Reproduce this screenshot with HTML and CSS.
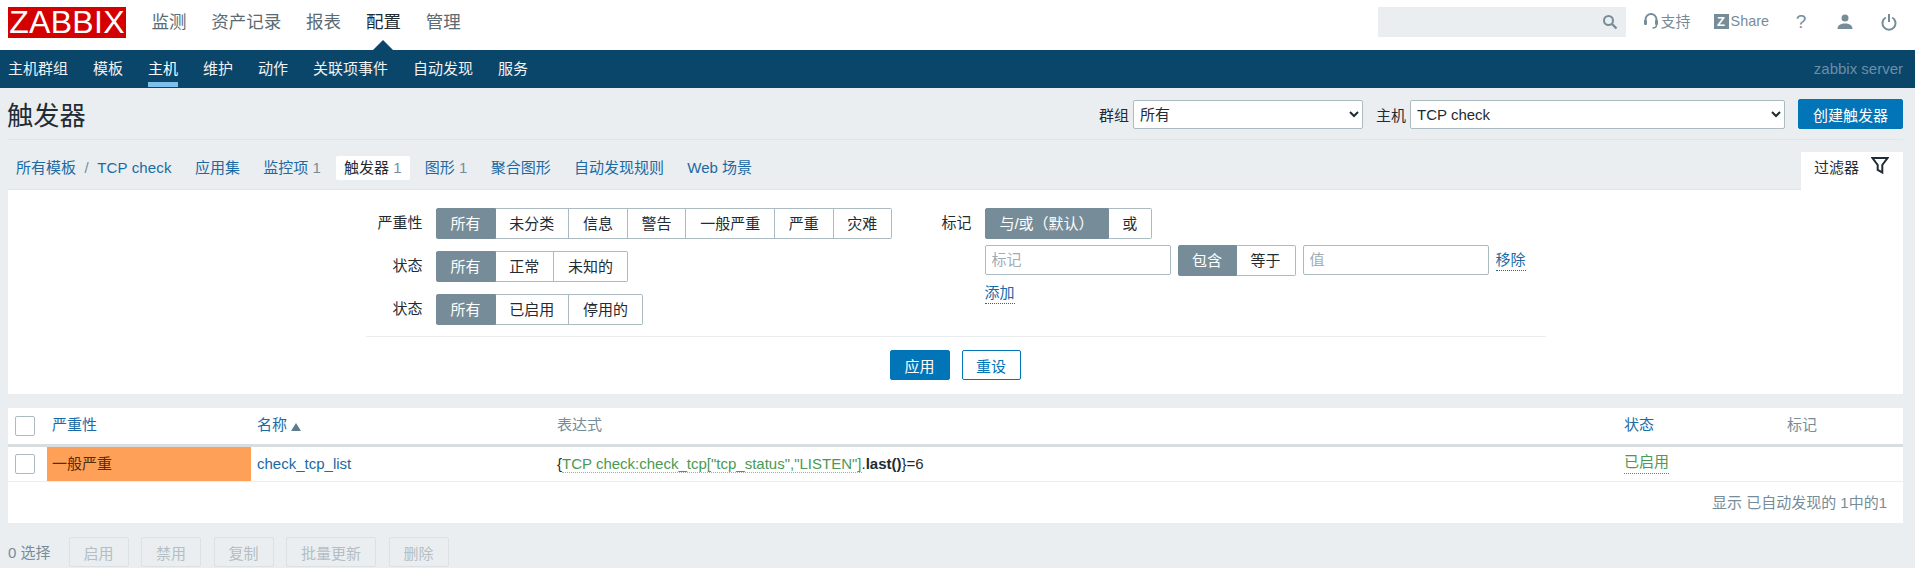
FILE: index.html
```html
<!DOCTYPE html>
<html lang="zh">
<head>
    <meta charset="UTF-8">
    <title>触发器</title>
    <link rel="stylesheet" href="styles.css">
</head>
<body>
    <header class="topbar">
        <a class="logo">ZABBIX</a>
        <nav class="main-nav">
            <a>监测</a>
            <a>资产记录</a>
            <a>报表</a>
            <a class="selected">配置</a>
            <a>管理</a>
        </nav>
        <div class="top-tools">
            <div class="search">
                <input type="text">
                <svg width="16" height="16" viewBox="0 0 16 16"><circle cx="6.5" cy="6.5" r="4.5" fill="none" stroke="#768d99" stroke-width="2"/><path d="M10 10l4.5 4.5" stroke="#768d99" stroke-width="2.4"/></svg>
            </div>
            <a class="tool support">
                <svg width="16" height="18" viewBox="0 0 16 18"><path d="M2.500 11V7.500a5.500 5.500 0 0 1 11 0V11" fill="none" stroke="#768d99" stroke-width="2"/><rect x="1" y="8" width="3" height="5" rx="1" fill="#768d99"/><rect x="12" y="8" width="3" height="5" rx="1" fill="#768d99"/><path d="M13.500 13c0 2-1.500 3-4 3" fill="none" stroke="#768d99" stroke-width="1.500"/></svg>
                支持
            </a>
            <a class="tool share"><span class="z-box">Z</span>Share</a>
            <a class="tool icon-only help">?</a>
            <a class="tool icon-only">
                <svg width="16" height="18" viewBox="0 0 16 18"><circle cx="8" cy="5" r="3.500" fill="#768d99"/><path d="M0.500 16c0-4 3.500-5.500 7.500-5.500s7.500 1.500 7.500 5.500z" fill="#768d99"/></svg>
            </a>
            <a class="tool icon-only">
                <svg width="16" height="18" viewBox="0 0 16 18"><path d="M4.800 4.500a6.500 6.500 0 1 0 6.400 0" fill="none" stroke="#768d99" stroke-width="2"/><path d="M8 1v8" stroke="#768d99" stroke-width="2"/></svg>
            </a>
        </div>
    </header>

    <nav class="sub-nav">
        <a>主机群组</a>
        <a>模板</a>
        <a class="selected">主机</a>
        <a>维护</a>
        <a>动作</a>
        <a>关联项事件</a>
        <a>自动发现</a>
        <a>服务</a>
        <span class="server-name">zabbix server</span>
    </nav>

    <main class="content">
        <div class="title-row">
            <h1>触发器</h1>
            <form class="title-controls">
                <label>群组</label>
                <select class="select-group"><option>所有</option></select>
                <label class="host-label">主机</label>
                <select class="select-host"><option>TCP check</option></select>
                <button type="button" class="btn-primary create">创建触发器</button>
            </form>
        </div>

        <div class="tabs-row">
            <div class="crumbs">
                <a>所有模板</a><span class="slash">/</span><a class="crumb-host">TCP check</a>
            </div>
            <a class="tab">应用集</a>
            <a class="tab">监控项 <sup>1</sup></a>
            <a class="tab active">触发器 <sup>1</sup></a>
            <a class="tab">图形 <sup>1</sup></a>
            <a class="tab">聚合图形</a>
            <a class="tab">自动发现规则</a>
            <a class="tab">Web 场景</a>
            <a class="filter-tab">过滤器
                <svg width="18" height="17" viewBox="0 0 18 17"><path d="M1.500 1h15l-5.200 7v7.500l-4.600-2.500v-5z" fill="none" stroke="#1f2c33" stroke-width="2"/></svg>
            </a>
        </div>

        <section class="filter">
            <div class="filter-form">
                <div class="filter-left">
                    <label>严重性</label>
                    <div class="seg">
                        <span class="on w60">所有</span><span>未分类</span><span>信息</span><span>警告</span><span>一般严重</span><span>严重</span><span>灾难</span>
                    </div>
                    <label>状态</label>
                    <div class="seg">
                        <span class="on w60">所有</span><span>正常</span><span>未知的</span>
                    </div>
                    <label>状态</label>
                    <div class="seg">
                        <span class="on w60">所有</span><span>已启用</span><span>停用的</span>
                    </div>
                </div>
                <div class="filter-right">
                    <label>标记</label>
                    <div class="seg">
                        <span class="on w124">与/或（默认）</span><span>或</span>
                    </div>
                    <div class="tag-row">
                        <input class="tag-input" type="text" placeholder="标记">
                        <div class="seg seg-small">
                            <span class="on">包含</span><span>等于</span>
                        </div>
                        <input class="tag-input" type="text" placeholder="值">
                        <a class="dotted">移除</a>
                    </div>
                    <div class="add-row"><a class="dotted">添加</a></div>
                </div>
            </div>
            <div class="filter-buttons">
                <button type="button" class="btn-primary apply">应用</button>
                <button type="button" class="btn-alt">重设</button>
            </div>
        </section>

        <section class="list">
            <table>
                <colgroup>
                    <col class="c-check"><col class="c-sev"><col class="c-name"><col class="c-expr"><col class="c-status"><col>
                </colgroup>
                <thead>
                    <tr>
                        <th><span class="box"></span></th>
                        <th><a>严重性</a></th>
                        <th class="name-col"><a>名称</a> <i class="sort"></i></th>
                        <th>表达式</th>
                        <th><a>状态</a></th>
                        <th>标记</th>
                    </tr>
                </thead>
                <tbody>
                    <tr>
                        <td><span class="box"></span></td>
                        <td class="sev-average">一般严重</td>
                        <td class="name-col"><a>check_tcp_list</a></td>
                        <td class="expr">{<a class="green item-link">TCP check:check_tcp["tcp_status","LISTEN"]</a>.<b>last()</b>}=6</td>
                        <td><a class="green dotted status-link">已启用</a></td>
                        <td></td>
                    </tr>
                </tbody>
            </table>
            <div class="table-stats">显示 已自动发现的 1中的1</div>
        </section>

        <div class="actions">
            <span class="selected-count">0 选择</span>
            <button type="button" disabled>启用</button>
            <button type="button" disabled>禁用</button>
            <button type="button" disabled>复制</button>
            <button type="button" disabled>批量更新</button>
            <button type="button" disabled>删除</button>
        </div>
    </main>
</body>
</html>
```

FILE: styles.css
```css
*{
    box-sizing: border-box;
}
html,body{
    margin: 0;
    height: 568px;
    overflow: hidden;
}
body{
    background: #ebeef0;
    color: #1f2c33;
    font-family: "Liberation Sans", "Noto Sans CJK SC", sans-serif;
    font-size: 15px;
}
a{
    color: #1a6aa5;
    text-decoration: none;
}

/* top bar */
.topbar{
    height: 50px;
    background: #fff;
    display: flex;
    align-items: flex-start;
    padding: 7px 18px 0 8px;
}
.logo{
    width: 118px;
    height: 31px;
    background: #d40000;
    color: #fff;
    font-size: 32px;
    line-height: 31px;
    text-align: center;
    letter-spacing: 0.3px;
}
.main-nav{
    display: flex;
    gap: 24.8px;
    margin-left: 25.5px;
    font-size: 17.5px;
    line-height: 30px;
}
.main-nav a{
    color: #5a6b75;
    position: relative;
}
.main-nav a.selected{
    color: #1f2c33;
}
.main-nav a.selected::after{
    content: "";
    position: absolute;
    left: 50%;
    bottom: -13px;
    margin-left: -10px;
    border: 10px solid transparent;
    border-top: 0;
    border-bottom-color: #0a466a;
}
.top-tools{
    margin-left: auto;
    display: flex;
    align-items: center;
    height: 30px;
    color: #768d99;
}
.search{
    width: 248px;
    height: 30px;
    background: #ebeef0;
    display: flex;
    align-items: center;
    padding-right: 8px;
    margin-right: 17px;
}
.search input{
    flex: 1;
    min-width: 0;
    border: 0;
    background: transparent;
}
.tool{
    color: #768d99;
    display: flex;
    align-items: center;
}
.support{
    gap: 2px;
    margin-right: 23px;
    padding-bottom: 3px;
}
.share{
    gap: 2px;
    margin-right: 24px;
    font-size: 14.4px;
    padding-bottom: 2px;
}
.z-box{
    width: 15px;
    height: 15px;
    background: #768d99;
    color: #fff;
    font-size: 13px;
    font-weight: bold;
    line-height: 15px;
    text-align: center;
}
.icon-only{
    width: 16px;
    justify-content: center;
    margin-right: 28px;
}
.icon-only:last-child{
    margin-right: 0;
}
.help{
    font-size: 19px;
}

/* second level menu */
.sub-nav{
    height: 38px;
    background: #0a466a;
    display: flex;
    gap: 25px;
    padding: 0 12px 0 8px;
    line-height: 37px;
}
.sub-nav a{
    color: #f2f2f2;
    height: 38px;
}
.sub-nav a.selected{
    color: #fff;
    border-bottom: 5px solid #7ec0ed;
    height: 37px;
}
.server-name{
    margin-left: auto;
    color: #6c8ea6;
}

/* page */
.content{
    padding: 0 12px 0 8px;
}
.title-row{
    height: 52px;
    border-bottom: 1px solid #e0e4e7;
    display: flex;
    align-items: center;
    justify-content: space-between;
}
h1{
    margin: 0 0 0 -1px;
    font-size: 26.25px;
    font-weight: normal;
}
.title-controls{
    display: flex;
    align-items: center;
    gap: 4px;
    padding-top: 1px;
}
.title-controls select{
    height: 29px;
    font-family: inherit;
    font-size: 15px;
    color: #1f2c33;
    background: #fff;
    border: 1px solid #acbbc2;
    border-radius: 2px;
    padding: 0 2px;
}
.select-group{
    width: 230px;
}
.select-host{
    width: 375px;
}
.host-label{
    margin-left: 9px;
}
.btn-primary{
    background: #0275b8;
    border: 1px solid #0275b8;
    border-radius: 2px;
    color: #fff;
    font: inherit;
    height: 30px;
}
.create{
    width: 105px;
    margin-left: 9px;
}

/* tabs */
.tabs-row{
    height: 50px;
    display: flex;
    gap: 23.3px;
    align-items: flex-start;
    padding: 16px 0 0 8px;
    border-bottom: 1px solid #e0e4e7;
    position: relative;
}
.tabs-row a{
    line-height: 24px;
}
.crumbs{
    line-height: 24px;
}
.crumb-host{
    letter-spacing: 0.15px;
}
.slash{
    margin: 0 8.5px;
    color: #768d99;
}
.tab sup{
    font-size: 15px;
    vertical-align: baseline;
    color: #768d99;
    line-height: 0;
}
.tab.active{
    background: #fff;
    color: #1f2c33;
    padding: 0 8px;
    margin: 0 -8px;
    border-radius: 2px;
}
.filter-tab{
    position: absolute;
    right: 0;
    top: 12px;
    width: 102px;
    height: 39px;
    background: #fff;
    color: #1f2c33;
    display: flex;
    align-items: flex-start;
    justify-content: flex-start;
    gap: 12px;
    padding: 4px 0 0 13px;
}
.filter-tab svg{
    margin-top: 1px;
}

/* filter */
.filter{
    background: #fff;
    height: 204px;
    padding-top: 18px;
}
.filter-form{
    width: 1180px;
    margin: 0 auto;
    height: 129px;
    display: flex;
    border-bottom: 1px solid #ebeef0;
}
label{
    text-align: right;
}
.filter-left{
    width: 565px;
    display: grid;
    grid-template-columns: 57px auto;
    grid-auto-rows: 31px;
    column-gap: 13px;
    row-gap: 12px;
    line-height: 30px;
    justify-content: start;
}
.filter-right{
    display: grid;
    grid-template-columns: 41px auto;
    column-gap: 13px;
    align-content: start;
    line-height: 30px;
}
.seg{
    display: flex;
    height: 31px;
    width: max-content;
}
.seg span{
    background: #fff;
    border: 1px solid #acbbc2;
    border-left-width: 0;
    padding: 0 13.8px;
    line-height: 29px;
    text-align: center;
}
.seg span:first-child{
    border-left-width: 1px;
    border-radius: 2px 0 0 2px;
}
.seg span:last-child{
    border-radius: 0 2px 2px 0;
}
.seg span.on{
    background: #768d99;
    border-color: #768d99;
    color: #fff;
}
.w60{
    width: 60px;
    padding: 0 !important;
}
.w124{
    width: 124px;
    padding: 0 !important;
}
.tag-row{
    grid-column: 2;
    display: flex;
    align-items: flex-start;
    margin-top: 6px;
    gap: 7px;
}
.tag-input{
    width: 186px;
    height: 30px;
    border: 1px solid #acbbc2;
    border-radius: 2px;
    padding: 0 6px;
    font: inherit;
}
.tag-input::placeholder{
    color: #a0adb5;
}
.seg-small span{
    width: 59px;
    padding: 0;
}
.dotted{
    border-bottom: 1px dotted currentColor;
    line-height: 16px;
    height: 19px;
    display: inline-block;
}
.tag-row .dotted{
    margin-top: 7px;
}
.add-row{
    grid-column: 2;
    display: flex;
    margin-top: 9px;
    height: 19px;
}
.filter-buttons{
    display: flex;
    justify-content: center;
    gap: 12px;
    margin-top: 13px;
    padding-right: 1px;
}
.apply{
    width: 60px;
}
.btn-alt{
    width: 59px;
    height: 30px;
    background: #fff;
    border: 1px solid #0275b8;
    border-radius: 2px;
    color: #0275b8;
    font: inherit;
}

/* list */
.list{
    background: #fff;
    margin-top: 14px;
    height: 115px;
}
table{
    width: 100%;
    border-collapse: collapse;
    table-layout: fixed;
}
.c-check{
    width: 39px;
}
.c-sev{
    width: 204px;
}
.c-name{
    width: 301px;
}
.c-expr{
    width: 1067px;
}
.c-status{
    width: 163px;
}
th{
    height: 37px;
    padding: 0 5px 4px;
    font-weight: normal;
    text-align: left;
    color: #768d99;
    border-bottom: 3px solid #d8dde0;
}
td{
    height: 36px;
    padding: 0 5px;
    border-bottom: 1px solid #ebeef0;
}
th:first-child,td:first-child{
    padding: 0 0 0 7px;
}
.name-col{
    padding-left: 6px;
}
.box{
    display: block;
    width: 20px;
    height: 20px;
    border: 1px solid #acbbc2;
    border-radius: 2px;
    background: #fff;
}
.sort{
    display: inline-block;
    border: 5px solid transparent;
    border-top: 0;
    border-bottom: 8px solid #5f7c8e;
    vertical-align: -1px;
}
.sev-average{
    background: #ffa059;
    color: #512f0c;
    padding-bottom: 2px;
}
.green{
    color: #4a9a52;
}
.item-link{
    border-bottom: 1px dotted #9fb2a4;
}
.status-link{
    line-height: 18px;
    height: 21px;
}
.expr{
    white-space: nowrap;
    padding-bottom: 1px;
}
.table-stats{
    text-align: right;
    color: #768d99;
    padding: 11px 16px 0 0;
    line-height: 20px;
}

/* mass actions */
.actions{
    display: flex;
    align-items: center;
    margin-top: 14px;
    height: 30px;
    gap: 12.5px;
}
.selected-count{
    color: #768d99;
    width: 48px;
    padding-bottom: 1px;
}
.actions button{
    height: 30px;
    width: 60px;
    background: #ebeef0;
    border: 1px solid #dde1e4;
    border-radius: 2px;
    color: #b3bec5;
    font: inherit;
}
.actions button:nth-of-type(4){
    width: 90px;
}
```
